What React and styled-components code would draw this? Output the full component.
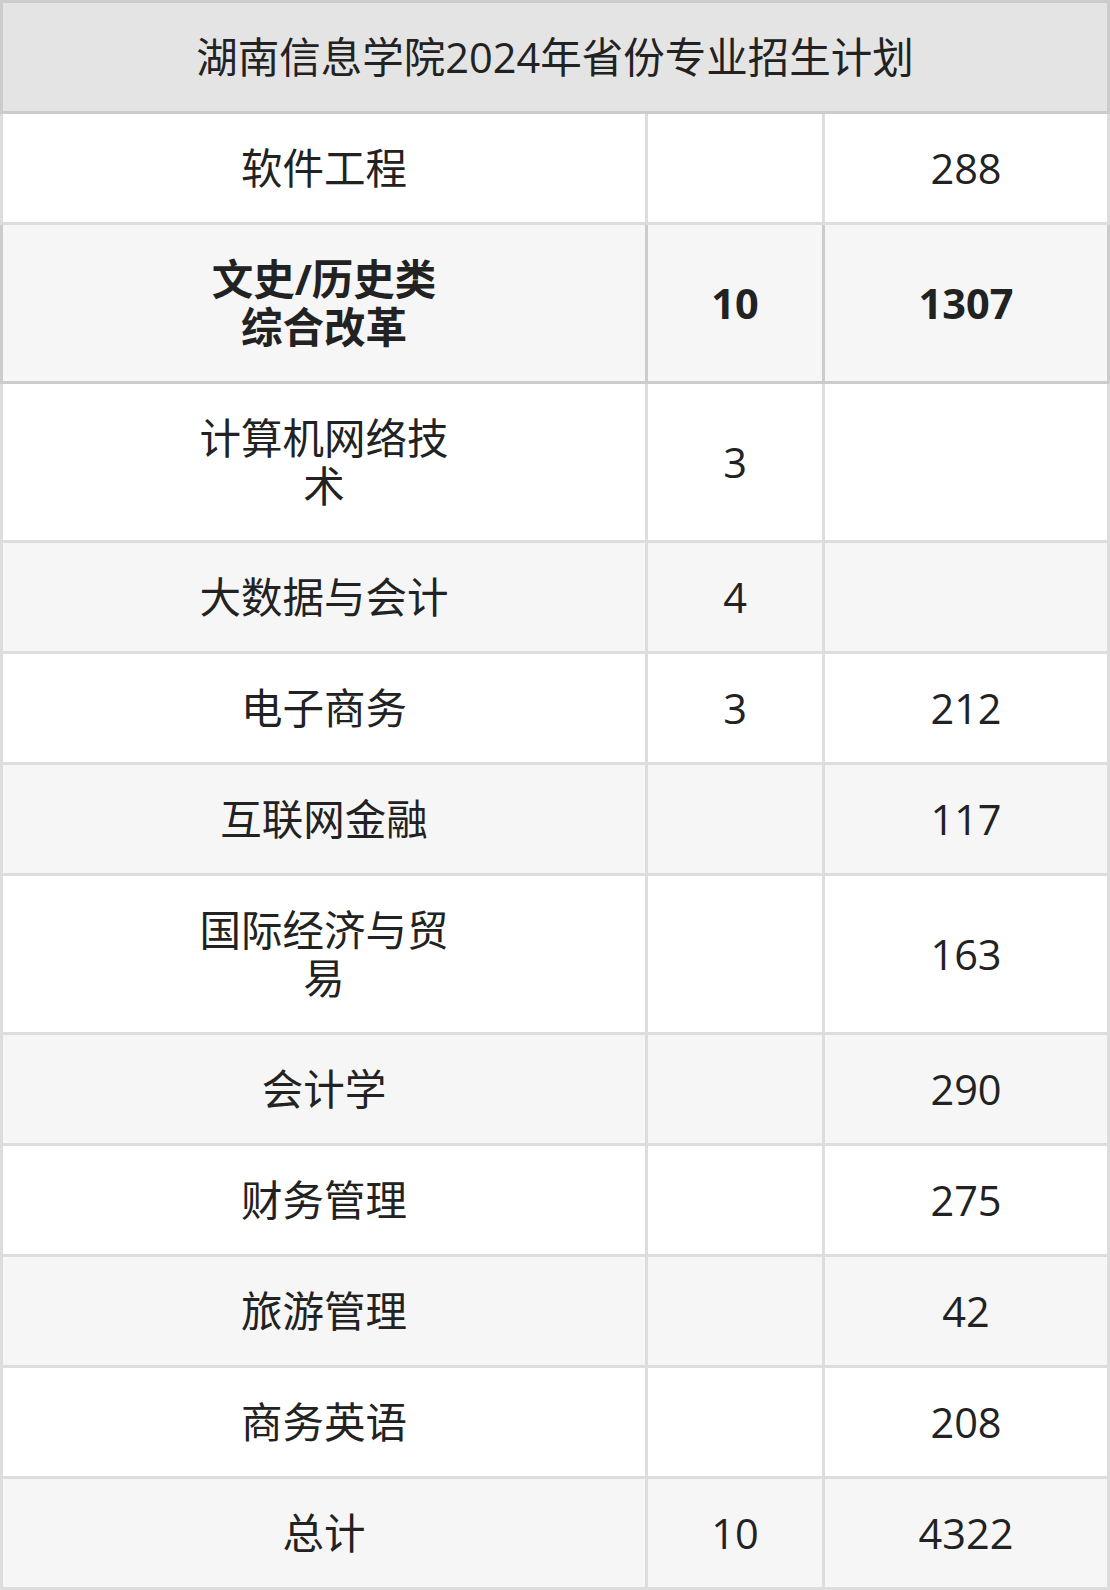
import React from "react";
import styled, { createGlobalStyle } from "styled-components";

const Global = createGlobalStyle`
  html, body { margin: 0; padding: 0; background: #ffffff; }
  body { font-family: "Open Sans", "Noto Sans CJK SC", sans-serif; }
`;

const Table = styled.table`
  width: 1110px;
  border-collapse: collapse;
  table-layout: fixed;
  color: #222222;
  font-family: "Open Sans", "Noto Sans CJK SC", sans-serif;
  font-size: 41.5px;
  line-height: 48px;
`;

const TitleCell = styled.th`
  background: #e4e4e4;
  border: 3px solid #cccccc;
  padding: 30px 0;
  font-weight: 400;
  text-align: center;
`;

const Row = styled.tr`
  background: ${(p) => (p.$even ? "#f6f6f6" : "#ffffff")};
`;

const Cell = styled.td`
  border: 3px solid ${(p) => (p.$strong ? "#cccccc" : "#dddddd")};
  padding: 30px 0;
  text-align: center;
  vertical-align: middle;
  font-weight: ${(p) => (p.$strong ? 700 : 400)};
`;

const Name = styled.span`
  display: inline-block;
  max-width: 254px;
`;

const rows = [
  { name: "软件工程", a: "", b: "288" },
  { name: "文史/历史类综合改革", a: "10", b: "1307", strong: true },
  { name: "计算机网络技术", a: "3", b: "" },
  { name: "大数据与会计", a: "4", b: "" },
  { name: "电子商务", a: "3", b: "212" },
  { name: "互联网金融", a: "", b: "117" },
  { name: "国际经济与贸易", a: "", b: "163" },
  { name: "会计学", a: "", b: "290" },
  { name: "财务管理", a: "", b: "275" },
  { name: "旅游管理", a: "", b: "42" },
  { name: "商务英语", a: "", b: "208" },
  { name: "总计", a: "10", b: "4322" },
];

export default function App() {
  return (
    <>
      <Global />
      <Table>
        <colgroup>
          <col style={{ width: 645 }} />
          <col style={{ width: 177 }} />
          <col style={{ width: 285 }} />
        </colgroup>
        <thead>
          <tr>
            <TitleCell colSpan={3}>湖南信息学院2024年省份专业招生计划</TitleCell>
          </tr>
        </thead>
        <tbody>
          {rows.map((r, i) => (
            <Row key={r.name} $even={i % 2 === 1}>
              <Cell $strong={r.strong}>
                <Name>{r.name}</Name>
              </Cell>
              <Cell $strong={r.strong}>{r.a}</Cell>
              <Cell $strong={r.strong}>{r.b}</Cell>
            </Row>
          ))}
        </tbody>
      </Table>
    </>
  );
}
